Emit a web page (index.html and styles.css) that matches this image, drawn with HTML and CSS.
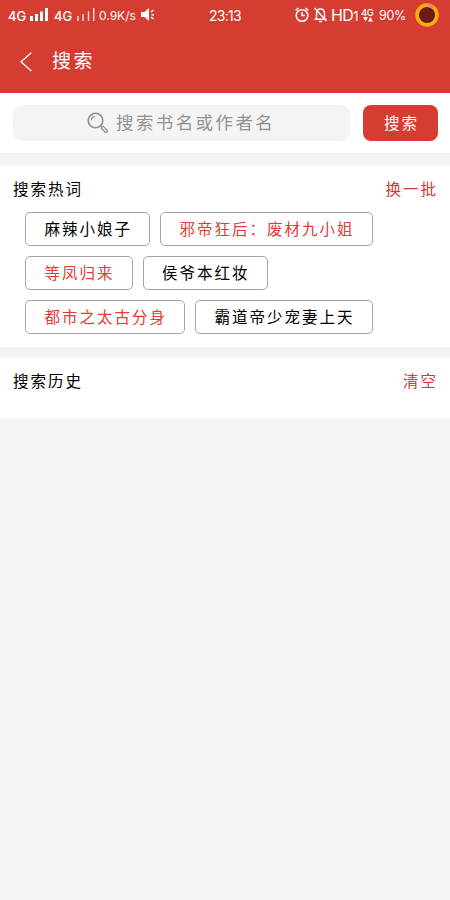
FILE: index.html
```
<!DOCTYPE html>
<html lang="zh-CN">
<head>
<meta charset="utf-8">
<title>搜索</title>
<link rel="stylesheet" href="styles.css">
</head>
<body>
<header class="top">
  <div class="status">
    <div class="status-left">
      <span class="net">4G</span>
      <svg class="bars" width="19" height="14" viewBox="0 0 19 14"><path d="M1.500 8v5M6.500 6v7M11.500 3.500v9.500M16.500 0v13" stroke="#fff" stroke-width="3"/></svg>
      <span class="net">4G</span>
      <svg class="bars-two" width="18" height="14" viewBox="0 0 18 14"><path d="M1 8v5M6 6v7M11.500 3.500v9.500M16.700 0v13" stroke="#fff" stroke-width="1.400" opacity=".85"/></svg>
      <span class="speed">0.9K/s</span>
      <svg class="sound" width="14" height="14" viewBox="0 0 14 14"><path d="M0 4h3.500L8 0v13L3.500 9H0z" fill="#fff"/><path d="M10 4l2.500-2M10.500 6.700H13M10 9l2.500 2" stroke="#fff" stroke-width="1.500"/></svg>
    </div>
    <span class="clock">23:13</span>
    <div class="status-right">
      <svg class="alarm" width="14" height="16" viewBox="0 0 14 16" fill="none" stroke="#fff" stroke-width="1.500"><circle cx="7" cy="8.500" r="5.800"/><path d="M7 5v3.500h3M.7 3.300L3.500 1M13.300 3.300L10.500 1"/></svg>
      <svg class="bell" width="13" height="16" viewBox="0 0 13 16" fill="none" stroke="#fff" stroke-width="1.400"><path d="M2.500 12V6.500C2.500 3.500 4 2 6.500 2s4 1.500 4 4.500V12M.5 12.200h12M5 14.500h3M.5 1l12 13"/></svg>
      <span class="hd">HD<small>1</small></span>
      <span class="data"><b>4G</b><svg width="10" height="5" viewBox="0 0 10 5"><path d="M0 0h5L2.500 4.500zM5 4.500h5L7.500 0z" fill="#fff"/></svg></span>
      <span class="battery">90%</span>
      <svg class="ring" width="24" height="24" viewBox="0 0 24 24"><circle cx="12" cy="12" r="9.900" fill="#6b1b12" stroke="#fbab0b" stroke-width="3.700"/><path d="M12.500 2.100Q16 2.200 18 4.300" fill="none" stroke="#f08080" stroke-width="3.700"/></svg>
    </div>
  </div>
  <div class="nav">
    <svg class="back" width="12" height="20" viewBox="0 0 12 20" fill="none" stroke="#fff" stroke-width="1.300"><path d="M11.300.7L1 9.800l10.300 9.200"/></svg>
    <h1>搜索</h1>
  </div>
</header>
<main>
  <section class="search">
    <div class="field">
      <svg class="lens" width="22" height="22" viewBox="0 0 22 22" fill="none" stroke="#929292"><circle cx="8.500" cy="8.500" r="7.300" stroke-width="1.600"/><path d="M4.200 8.500Q4.500 5 8 4.300" stroke-width="1.200"/><path d="M13.700 13.700l1.500 1.500" stroke-width="1.500"/><path d="M15.800 15.800l3.200 3.200" stroke-width="4" stroke-linecap="round"/><path d="M15.900 15.900l3 3" stroke="#e3e3e3" stroke-width="1.500" stroke-linecap="round"/></svg>
      <span>搜索书名或作者名</span>
    </div>
    <button class="submit">搜索</button>
  </section>
  <section class="hot">
    <div class="heading"><h2>搜索热词</h2><a>换一批</a></div>
    <div class="tags">
      <span class="tag">麻辣小娘子</span>
      <span class="tag red">邪帝狂后：废材九小姐</span>
      <span class="tag red">等凤归来</span>
      <span class="tag">侯爷本红妆</span>
      <span class="tag red">都市之太古分身</span>
      <span class="tag">霸道帝少宠妻上天</span>
    </div>
  </section>
  <section class="history">
    <div class="heading"><h2>搜索历史</h2><a>清空</a></div>
  </section>
</main>
</body>
</html>
```
FILE: styles.css
```
* { box-sizing: border-box; }
body {
  margin: 0;
  min-height: 900px;
  background: #f4f4f4;
  color: #000;
  font-family: "Noto Sans CJK SC", sans-serif;
}
svg { display: block; flex: none; }
h1, h2 { margin: 0; font-weight: 400; }
.top { height: 93px; background: #d53c32; color: #fff; }
.status {
  display: grid;
  grid-template-columns: 209px 86px 1fr;
  height: 30px;
  align-items: center;
  font-family: Inter, sans-serif;
  white-space: nowrap;
}
.status-left, .status-right { display: flex; align-items: center; height: 30px; }
.status-left { padding-left: 8px; }
.net { width: 22px; font-size: 13px; font-weight: 500; letter-spacing: -.1px; padding-top: 2px; }
.bars { margin-right: 5px; }
.bars-two { margin-left: 1px; }
.speed { width: 44px; padding-left: 4px; font-size: 12px; letter-spacing: 0; }
.sound { margin-left: 2px; }
.clock { font-size: 14px; letter-spacing: -.7px; }
.bell { margin-left: 5px; }
.hd { width: 30px; margin-left: 4px; font-size: 16px; line-height: 20px; letter-spacing: -.6px; }
.hd small { font-size: 13px; }
.data { width: 14px; height: 15px; }
.data b { display: block; font-size: 9.500px; font-weight: 500; line-height: 9px; letter-spacing: -.4px; }
.data svg { margin-left: 2px; }
.battery { width: 32px; padding-left: 4px; font-size: 12.500px; letter-spacing: -.3px; }
.ring { margin-left: 8px; }
.nav { display: flex; align-items: center; height: 63px; padding-left: 20px; }
.back { margin-top: 1px; }
.nav h1 { margin-left: 20px; font-size: 19px; line-height: 26px; letter-spacing: 2.500px; margin-top: -3px; }
.search { display: flex; gap: 13px; height: 60px; padding: 12px 12px 0 13px; background: #fff; }
.field {
  display: flex;
  width: 337px;
  height: 36px;
  padding-left: 74px;
  align-items: center;
  border-radius: 9px;
  background: #f4f4f4;
  color: #929292;
  font-size: 17.500px;
  letter-spacing: 2.400px;
}
.field span { margin: -3px 0 0 7px; line-height: 26px; }
.submit {
  width: 75px;
  height: 36px;
  padding: 0 0 3px 2px;
  border: 0;
  border-radius: 8px;
  background: #d53c32;
  color: #fff;
  font: 400 15.500px "Noto Sans CJK SC", sans-serif;
  letter-spacing: 2px;
}
.hot { height: 181px; margin-top: 13px; background: #fff; }
.heading {
  display: flex;
  justify-content: space-between;
  height: 46px;
  padding: 10px 12px 0 13px;
  font-size: 15.500px;
  line-height: 24px;
  letter-spacing: 2px;
}
.heading h2 { font-size: inherit; }
.heading a { color: #d93830; }
.tags { display: flex; flex-wrap: wrap; gap: 10px; padding: 0 60px 0 25px; }
.tag {
  height: 34px;
  padding: 0 17px 0 18.500px;
  border: 1px solid #a5a5a5;
  border-radius: 5px;
  font-size: 15.500px;
  line-height: 30px;
  letter-spacing: 2px;
  white-space: nowrap;
}
.tag.red { color: #e43b34; }
.history { height: 60px; margin-top: 11px; background: #fff; }
```
